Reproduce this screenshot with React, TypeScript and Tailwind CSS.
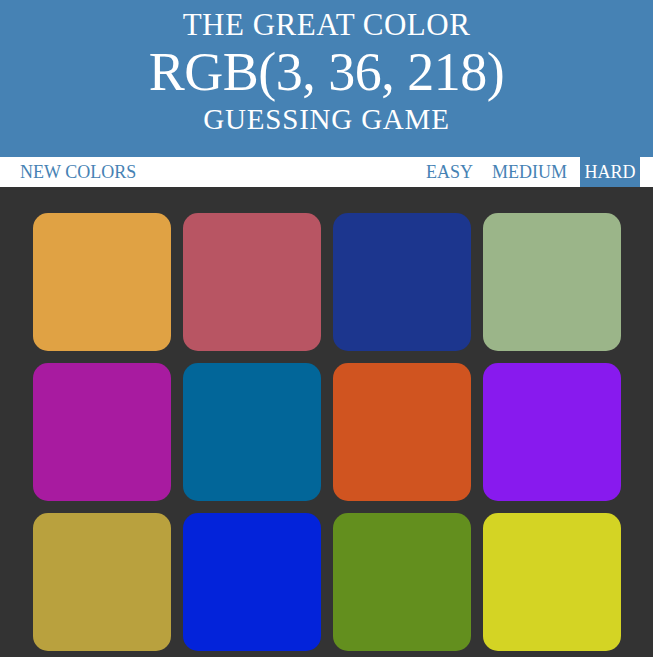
import React from "react";

const colors = [
  "#e0a244", "#b85563", "#1c368e", "#9bb589",
  "#a81ba0", "#026699", "#d05420", "#881aee",
  "#b9a13e", "#0323da", "#638f1e", "#d4d424",
];

export default function App() {
  return (
    <div className="min-h-[657px] bg-[#333333]" style={{ fontFamily: '"Liberation Serif", serif' }}>
      <div className="bg-[#4682b4] text-white text-center uppercase pt-[8px] h-[157px]">
        <div className="text-[31px] leading-[34px] tracking-[0.5px]">The Great Color</div>
        <div className="text-[54px] leading-[56px] mt-[2px] tracking-[-0.5px]">RGB(3, 36, 218)</div>
        <div className="text-[29px] leading-[34px] mt-[2px] tracking-[0.8px]">Guessing Game</div>
      </div>
      <div className="bg-white h-[30px] flex items-stretch text-[#4682b4] text-[18px] uppercase">
        <div className="pl-[20px] flex items-center">New Colors</div>
        <div className="flex-1" />
        <div className="flex items-center mr-[19px]">Easy</div>
        <div className="flex items-center mr-[13px]">Medium</div>
        <div className="flex items-center w-[60px] justify-center bg-[#4682b4] text-white mr-[13px]">Hard</div>
      </div>
      <div className="w-[588px] mx-auto pt-[26px] grid grid-cols-4 gap-[12px]">
        {colors.map((c, i) => (
          <div key={i} className="h-[138px] rounded-[15px]" style={{ backgroundColor: c }} />
        ))}
      </div>
    </div>
  );
}
